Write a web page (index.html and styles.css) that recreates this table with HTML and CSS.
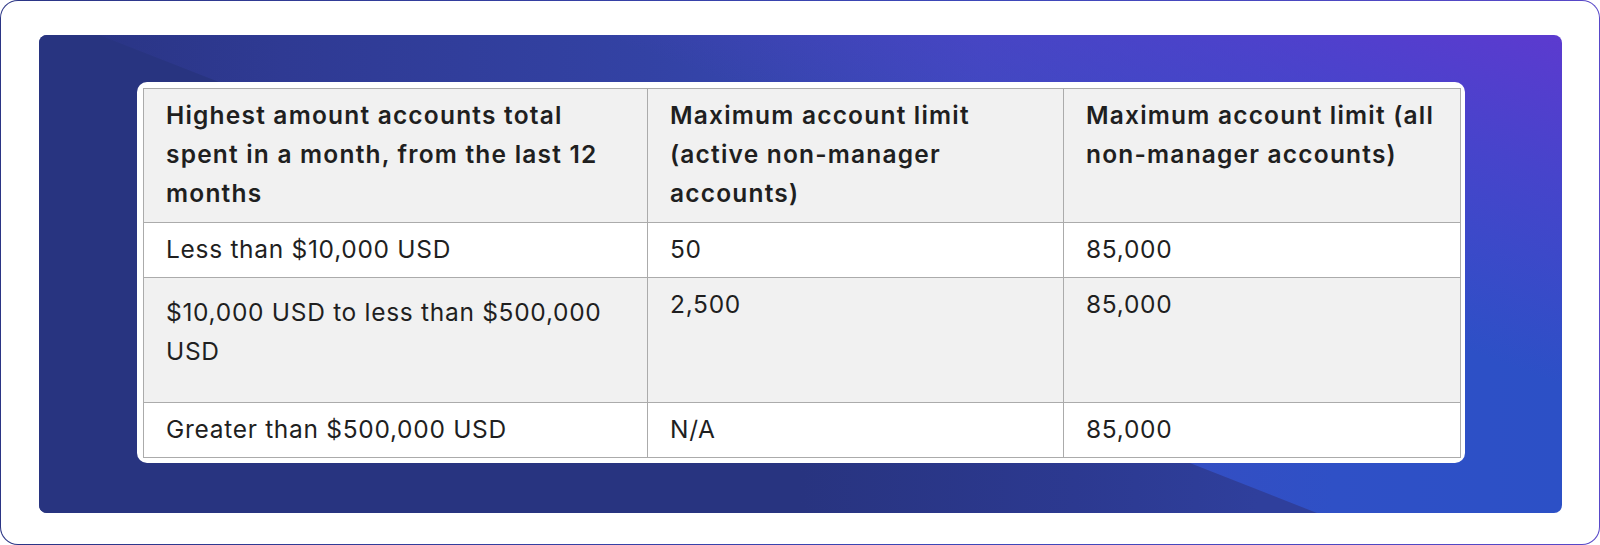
FILE: index.html
```html
<!DOCTYPE html>
<html lang="en">
<head>
<meta charset="utf-8">
<title>Account limits</title>
<link rel="stylesheet" href="styles.css">
</head>
<body>
<div class="frame">
  <div class="panel">
    <div class="card">
      <div class="grid" role="table">
        <div class="cell head">Highest amount accounts total<br>spent in a month, from the last 12<br>months</div>
        <div class="cell head">Maximum account limit<br>(active non-manager<br>accounts)</div>
        <div class="cell head">Maximum account limit (all<br>non-manager accounts)</div>

        <div class="cell">Less than $10,000 USD</div>
        <div class="cell">50</div>
        <div class="cell">85,000</div>

        <div class="cell alt tall">$10,000 USD to less than $500,000 USD</div>
        <div class="cell alt">2,500</div>
        <div class="cell alt">85,000</div>

        <div class="cell">Greater than $500,000 USD</div>
        <div class="cell">N/A</div>
        <div class="cell">85,000</div>
      </div>
    </div>
  </div>
</div>
</body>
</html>
```
FILE: styles.css
```css
* { box-sizing: border-box; }
html, body { margin: 0; padding: 0; background: #fff; }
body { font-family: Inter, "Noto Sans", sans-serif; color: #1f1f1f; }

.frame {
  width: 1600px;
  height: 545px;
  border: 1px solid transparent;
  border-radius: 18px;
  background:
    linear-gradient(#fff, #fff) padding-box,
    linear-gradient(to right, #2b3585, #3c47b8 60%, #5848c8) border-box;
  padding: 34px 37px 31px 38px;
}

.panel {
  position: relative;
  height: 478px;
  border-radius: 8px;
  overflow: hidden;
  padding: 47px 0 0 98px;
  background:
    linear-gradient(200deg, rgba(92, 58, 207, 1) 0%, rgba(92, 58, 207, 0.55) 14%, rgba(92, 58, 207, 0) 34%),
    linear-gradient(to right, #283480 0%, #2b3688 6%, #2f3a93 16%, #3342a4 40%, #3a4cbd 62%, #2f50c6 85%, #2c50c6 100%);
}

.panel::before {
  content: "";
  position: absolute;
  inset: 0;
  background: linear-gradient(to right, #283480 0%, #283480 50%, #2c3990 68%, #2f3f9c 80%);
  clip-path: polygon(0 0, 60px 0, 1278px 478px, 0 478px);
}

.card {
  position: relative;
  z-index: 1;
  width: 1328px;
  background: #fff;
  border-radius: 10px;
  padding: 6px 4px 5px 6px;
}

.grid {
  display: grid;
  grid-template-columns: 504px 416px 397px;
  border-top: 1px solid #ababab;
  border-left: 1px solid #ababab;
}

.cell {
  font-size: 24.5px;
  letter-spacing: 0.7px;
  line-height: 39px;
  padding: 7px 16px 8px 22px;
  border-right: 1px solid #ababab;
  border-bottom: 1px solid #ababab;
  background: #fff;
  font-weight: 400;
}

.head {
  background: #f1f1f1;
  font-weight: 600;
  letter-spacing: 1.2px;
  padding-bottom: 9px;
}

.alt { background: #f1f1f1; }

.tall {
  padding-top: 15px;
  padding-bottom: 31px;
}
```
